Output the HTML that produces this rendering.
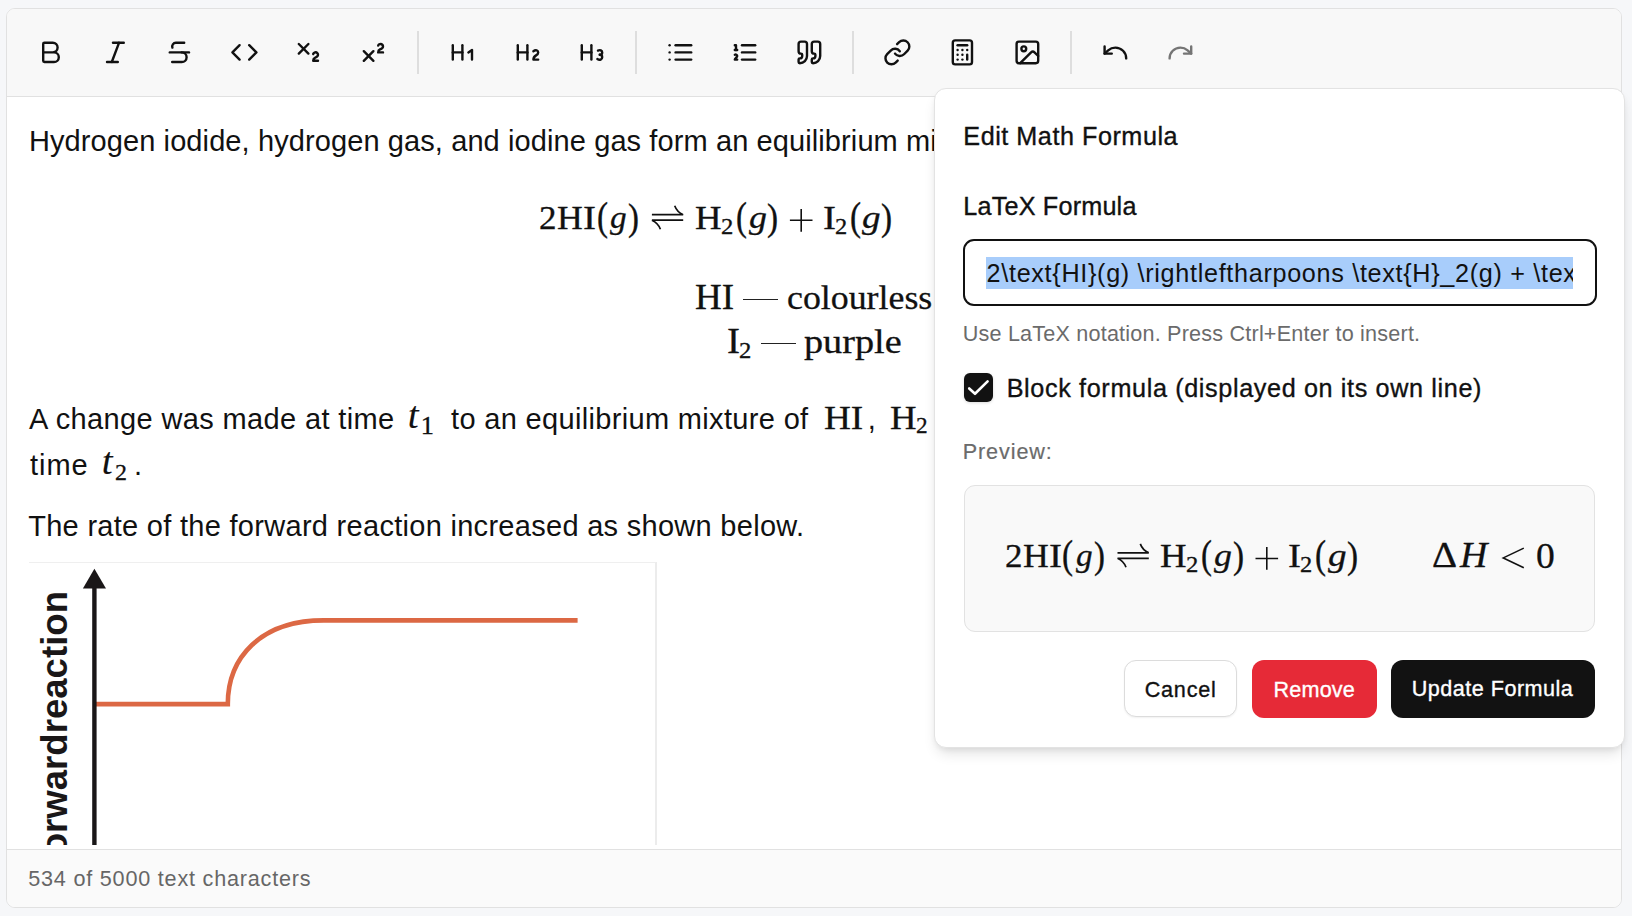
<!DOCTYPE html>
<html>
<head>
<meta charset="utf-8">
<style>
html,body{margin:0;padding:0}
body{width:1632px;height:916px;background:#f6f7f9;position:relative;overflow:hidden;font-family:"Liberation Sans",sans-serif;color:#111}
.abs{position:absolute}
.editor{position:absolute;left:6px;top:8px;width:1616px;height:900px;box-sizing:border-box;border:1px solid #e1e1e1;border-radius:9px;background:#fff;overflow:hidden}
.toolbar{position:absolute;left:0;top:0;width:1614px;height:87px;background:#f8f8f8;border-bottom:1px solid #e1e1e1}
.footer{position:absolute;left:0;top:840px;width:1614px;height:58px;background:#fafafa;border-top:1px solid #e1e1e1}
.ic{position:absolute;top:38px;width:28.8px;height:28.8px;fill:none;stroke:#111;stroke-width:2;stroke-linecap:round;stroke-linejoin:round}
.sep{position:absolute;top:31px;width:2px;height:43px;background:#dedede}
.t{position:absolute;white-space:pre;line-height:1}
.popup{position:absolute;left:934px;top:88px;width:691px;height:660px;box-sizing:border-box;background:#fff;border:1px solid #e3e3e3;border-radius:12px;box-shadow:0 8px 14px -3px rgba(0,0,0,.12),0 3px 6px -2px rgba(0,0,0,.08)}
.btn{position:absolute;box-sizing:border-box;border-radius:12px}
</style>
</head>
<body>
<div class="editor">
  <div class="toolbar"></div>
  <div class="footer"></div>
</div>
<!-- toolbar icons (page coords) -->
<svg class="ic" style="left:36px" viewBox="0 0 24 24"><path d="M6 12h9a4 4 0 0 1 0 8H7a1 1 0 0 1-1-1V5a1 1 0 0 1 1-1h7a4 4 0 0 1 0 8"/></svg>
<svg class="ic" style="left:100.6px" viewBox="0 0 24 24"><line x1="19" x2="10" y1="4" y2="4"/><line x1="14" x2="5" y1="20" y2="20"/><line x1="15" x2="9" y1="4" y2="20"/></svg>
<svg class="ic" style="left:165.2px" viewBox="0 0 24 24"><path d="M16 4H9a3 3 0 0 0-2.83 4"/><path d="M14 12a4 4 0 0 1 0 8H6"/><line x1="4" x2="20" y1="12" y2="12"/></svg>
<svg class="ic" style="left:229.8px" viewBox="0 0 24 24"><polyline points="16 18 22 12 16 6"/><polyline points="8 6 2 12 8 18"/></svg>
<svg class="ic" style="left:294.4px" viewBox="0 0 24 24"><path d="m4 5 8 8"/><path d="m12 5-8 8"/><path d="M20 19h-4c0-1.5.44-2 1.5-2.5S20 15.33 20 14c0-.47-.17-.93-.48-1.29a2.110 2.110 0 0 0-2.620-.440c-.42.24-.74.62-.9 1.07"/></svg>
<svg class="ic" style="left:359px" viewBox="0 0 24 24"><path d="m4 19 8-8"/><path d="m12 19-8-8"/><path d="M20 12h-4c0-1.5.442-2 1.5-2.5S20 8.334 20 7.002c0-.472-.17-.93-.484-1.290a2.105 2.105 0 0 0-2.617-.436c-.42.239-.738.614-.899 1.060"/></svg>
<div class="sep" style="left:417px"></div>
<svg class="ic" style="left:448px" viewBox="0 0 24 24"><path d="M4 12h8"/><path d="M4 18V6"/><path d="M12 18V6"/><path d="m17 12 3-2v8"/></svg>
<svg class="ic" style="left:512.6px" viewBox="0 0 24 24"><path d="M4 12h8"/><path d="M4 18V6"/><path d="M12 18V6"/><path d="M21 18h-4c0-4 4-3 4-6 0-1.5-2-2.5-4-1"/></svg>
<svg class="ic" style="left:577.2px" viewBox="0 0 24 24"><path d="M4 12h8"/><path d="M4 18V6"/><path d="M12 18V6"/><path d="M17.5 10.5c1.7-1 3.5 0 3.5 1.5a2 2 0 0 1-2 2"/><path d="M17 17.5c2 1.5 4 .3 4-1.5a2 2 0 0 0-2-2"/></svg>
<div class="sep" style="left:635px"></div>
<svg class="ic" style="left:666px" viewBox="0 0 24 24"><line x1="8" x2="21" y1="6" y2="6"/><line x1="8" x2="21" y1="12" y2="12"/><line x1="8" x2="21" y1="18" y2="18"/><line x1="3" x2="3.01" y1="6" y2="6"/><line x1="3" x2="3.01" y1="12" y2="12"/><line x1="3" x2="3.01" y1="18" y2="18"/></svg>
<svg class="ic" style="left:730.4px" viewBox="0 0 24 24"><line x1="10" x2="21" y1="6" y2="6"/><line x1="10" x2="21" y1="12" y2="12"/><line x1="10" x2="21" y1="18" y2="18"/><path d="M4 6h1v4"/><path d="M4 10h2"/><path d="M6 18H4c0-1 2-2 2-3s-1-1.5-2-1"/></svg>
<svg class="ic" style="left:795px" viewBox="0 0 24 24"><path d="M16 3a2 2 0 0 0-2 2v6a2 2 0 0 0 2 2 1 1 0 0 1 1 1v1a2 2 0 0 1-2 2 1 1 0 0 0-1 1v2a1 1 0 0 0 1 1 6 6 0 0 0 6-6V5a2 2 0 0 0-2-2z"/><path d="M5 3a2 2 0 0 0-2 2v6a2 2 0 0 0 2 2 1 1 0 0 1 1 1v1a2 2 0 0 1-2 2 1 1 0 0 0-1 1v2a1 1 0 0 0 1 1 6 6 0 0 0 6-6V5a2 2 0 0 0-2-2z"/></svg>
<div class="sep" style="left:852px"></div>
<svg class="ic" style="left:883px" viewBox="0 0 24 24"><path d="M10 13a5 5 0 0 0 7.54.54l3-3a5 5 0 0 0-7.07-7.07l-1.72 1.71"/><path d="M14 11a5 5 0 0 0-7.54-.54l-3 3a5 5 0 0 0 7.07 7.07l1.71-1.71"/></svg>
<svg class="ic" style="left:948.2px" viewBox="0 0 24 24"><rect width="16" height="20" x="4" y="2" rx="2"/><line x1="8" x2="16" y1="6" y2="6"/><line x1="16" x2="16" y1="14" y2="18"/><path d="M16 10h.01"/><path d="M12 10h.01"/><path d="M8 10h.01"/><path d="M12 14h.01"/><path d="M8 14h.01"/><path d="M12 18h.01"/><path d="M8 18h.01"/></svg>
<svg class="ic" style="left:1013px" viewBox="0 0 24 24"><rect width="18" height="18" x="3" y="3" rx="2" ry="2"/><circle cx="9" cy="9" r="2"/><path d="m21 15-3.086-3.086a2 2 0 0 0-2.828 0L6 21"/></svg>
<div class="sep" style="left:1070px"></div>
<svg class="ic" style="left:1101px" viewBox="0 0 24 24"><path d="M3 7v6h6"/><path d="M21 17a9 9 0 0 0-9-9 9 9 0 0 0-6 2.3L3 13"/></svg>
<svg class="ic" style="left:1166px;stroke:#757575" viewBox="0 0 24 24"><path d="M21 7v6h-6"/><path d="M3 17a9 9 0 0 1 9-9 9 9 0 0 1 6 2.3l3 2.7"/></svg>



<div class='abs' style='left:29px;top:97px;width:640px;height:748px;overflow:hidden'>
 <div class='abs' style='left:0;top:465px;width:628px;height:400px;background:#fff;border-top:1px solid #efefef;border-right:2px solid #ececec;box-sizing:border-box'></div>
 <svg class='abs' style='left:-29px;top:-97px;overflow:visible' width='700' height='900'>
  <path d='M96 704.1H227.8C227.8 658.1 260 620.4 324 620.4H577.6' fill='none' stroke='#dc6844' stroke-width='4.6'/>
  <path d='M94.4 845V586' stroke='#1a1718' stroke-width='4.4'/>
  <path d='M94.4 568.7L106 588.5H82.9Z' fill='#1a1718'/>
  <text transform='translate(66.8 591) rotate(-90)' text-anchor='end' font-family='Liberation Sans' font-weight='700' font-size='36.6' fill='#1a1718'>Rate of forwardreaction</text>
 </svg>
</div>

<div class='t' style='left:28.90px;top:126.80px;font-family:"Liberation Sans";font-style:normal;font-weight:400;font-size:29px;color:#111;letter-spacing:0.100px;'>Hydrogen iodide, hydrogen gas, and iodine gas form an equilibrium</div>
<div class='t' style='left:905.90px;top:126.80px;font-family:"Liberation Sans";font-style:normal;font-weight:400;font-size:29px;color:#111;letter-spacing:0.3px;'>mixture.</div>
<div class='t' style='left:29.10px;top:404.70px;font-family:"Liberation Sans";font-style:normal;font-weight:400;font-size:29px;color:#111;letter-spacing:0.371px;'>A change was made at time</div>
<div class='t' style='left:451.00px;top:404.70px;font-family:"Liberation Sans";font-style:normal;font-weight:400;font-size:29px;color:#111;letter-spacing:0.333px;'>to an equilibrium mixture of</div>
<div class='t' style='left:867.80px;top:404.70px;font-family:"Liberation Sans";font-style:normal;font-weight:400;font-size:29px;color:#111;'>,</div>
<div class='t' style='left:30.10px;top:450.70px;font-family:"Liberation Sans";font-style:normal;font-weight:400;font-size:29px;color:#111;letter-spacing:0.933px;'>time</div>
<div class='t' style='left:134.00px;top:450.70px;font-family:"Liberation Sans";font-style:normal;font-weight:400;font-size:29px;color:#111;'>.</div>
<div class='t' style='left:28.20px;top:511.70px;font-family:"Liberation Sans";font-style:normal;font-weight:400;font-size:29px;color:#111;letter-spacing:0.291px;'>The rate of the forward reaction increased as shown below.</div>
<div class='t' style='left:539.00px;top:201.30px;font-family:"Liberation Serif";font-style:normal;font-weight:400;font-size:34.8px;color:#111;transform:scale(1.0071,0.9875);transform-origin:2px 4px;-webkit-text-stroke:0.3px #111;'>2</div>
<div class='t' style='left:556.90px;top:201.30px;font-family:"Liberation Serif";font-style:normal;font-weight:400;font-size:34.8px;color:#111;transform:scale(1.0261,0.9875);transform-origin:1px 4px;-webkit-text-stroke:0.3px #111;'>H</div>
<div class='t' style='left:583.11px;top:201.30px;font-family:"Liberation Serif";font-style:normal;font-weight:400;font-size:34.8px;color:#111;transform:scale(1.1200,0.9875);transform-origin:1px 4px;-webkit-text-stroke:0.3px #111;'>I</div>
<div class='t' style='left:596.60px;top:198.90px;font-family:"Liberation Serif";font-style:normal;font-weight:400;font-size:34.8px;color:#111;transform:scale(0.9556,1.1258);transform-origin:2px 4px;-webkit-text-stroke:0.3px #111;'>(</div>
<div class='t' style='left:610.30px;top:202.30px;font-family:"Liberation Serif";font-style:italic;font-weight:400;font-size:34.8px;color:#111;transform:scale(0.9563,0.9080);transform-origin:0px 11px;-webkit-text-stroke:0.3px #111;'>g</div>
<div class='t' style='left:628.30px;top:199.90px;font-family:"Liberation Serif";font-style:normal;font-weight:400;font-size:34.8px;color:#111;transform:scale(0.9444,1.0906);transform-origin:1px 3px;-webkit-text-stroke:0.3px #111;'>)</div>
<div class='t' style='left:694.70px;top:201.30px;font-family:"Liberation Serif";font-style:normal;font-weight:400;font-size:34.8px;color:#111;transform:scale(1.0565,0.9875);transform-origin:1px 4px;-webkit-text-stroke:0.3px #111;'>H</div>
<div class='t' style='left:720.80px;top:214.80px;font-family:"Liberation Serif";font-style:normal;font-weight:400;font-size:23.5px;color:#111;transform:scale(1.0500,0.9800);transform-origin:1px 4px;-webkit-text-stroke:0.3px #111;'>2</div>
<div class='t' style='left:735.80px;top:198.90px;font-family:"Liberation Serif";font-style:normal;font-weight:400;font-size:34.8px;color:#111;transform:scale(0.9444,1.1258);transform-origin:2px 4px;-webkit-text-stroke:0.3px #111;'>(</div>
<div class='t' style='left:748.80px;top:202.30px;font-family:"Liberation Serif";font-style:italic;font-weight:400;font-size:34.8px;color:#111;transform:scale(1.0312,0.9080);transform-origin:0px 11px;-webkit-text-stroke:0.3px #111;'>g</div>
<div class='t' style='left:767.40px;top:199.90px;font-family:"Liberation Serif";font-style:normal;font-weight:400;font-size:34.8px;color:#111;transform:scale(0.9556,1.0906);transform-origin:1px 3px;-webkit-text-stroke:0.3px #111;'>)</div>
<div class='t' style='left:822.71px;top:201.30px;font-family:"Liberation Serif";font-style:normal;font-weight:400;font-size:34.8px;color:#111;transform:scale(1.1200,0.9875);transform-origin:1px 4px;-webkit-text-stroke:0.3px #111;'>I</div>
<div class='t' style='left:834.80px;top:214.80px;font-family:"Liberation Serif";font-style:normal;font-weight:400;font-size:23.5px;color:#111;transform:scale(1.0400,0.9800);transform-origin:1px 4px;-webkit-text-stroke:0.3px #111;'>2</div>
<div class='t' style='left:849.70px;top:198.90px;font-family:"Liberation Serif";font-style:normal;font-weight:400;font-size:34.8px;color:#111;transform:scale(0.9556,1.1258);transform-origin:2px 4px;-webkit-text-stroke:0.3px #111;'>(</div>
<div class='t' style='left:862.20px;top:202.30px;font-family:"Liberation Serif";font-style:italic;font-weight:400;font-size:34.8px;color:#111;transform:scale(1.0687,0.9080);transform-origin:0px 11px;-webkit-text-stroke:0.3px #111;'>g</div>
<div class='t' style='left:881.40px;top:199.90px;font-family:"Liberation Serif";font-style:normal;font-weight:400;font-size:34.8px;color:#111;transform:scale(0.9556,1.0906);transform-origin:1px 3px;-webkit-text-stroke:0.3px #111;'>)</div>
<div class='t' style='left:695.40px;top:280.80px;font-family:"Liberation Serif";font-style:normal;font-weight:400;font-size:34.8px;color:#111;transform:scale(1.0657,1.0042);transform-origin:1px 4px;-webkit-text-stroke:0.3px #111;'>HI</div>
<div class='t' style='left:786.70px;top:282.10px;font-family:"Liberation Serif";font-style:normal;font-weight:400;font-size:34.8px;color:#111;transform:scale(1.0302,0.9520);transform-origin:1px 3px;-webkit-text-stroke:0.3px #111;'>colourless</div>
<div class='t' style='left:726.56px;top:325.00px;font-family:"Liberation Serif";font-style:normal;font-weight:400;font-size:34.8px;color:#111;transform:scale(1.1200,1.0042);transform-origin:1px 4px;-webkit-text-stroke:0.3px #111;'>I</div>
<div class='t' style='left:738.60px;top:339.00px;font-family:"Liberation Serif";font-style:normal;font-weight:400;font-size:23.5px;color:#111;transform:scale(1.0500,1.0000);transform-origin:1px 4px;-webkit-text-stroke:0.3px #111;'>2</div>
<div class='t' style='left:803.90px;top:325.90px;font-family:"Liberation Serif";font-style:normal;font-weight:400;font-size:34.8px;color:#111;transform:scale(1.1000,0.9424);transform-origin:1px 3px;-webkit-text-stroke:0.3px #111;'>purple</div>
<div class='t' style='left:408.32px;top:399.40px;font-family:"Liberation Serif";font-style:italic;font-weight:400;font-size:34.8px;color:#111;transform:scale(1.1200,1.0650);transform-origin:2px 8px;-webkit-text-stroke:0.1px #111;'>t</div>
<div class='t' style='left:420.82px;top:414.30px;font-family:"Liberation Serif";font-style:normal;font-weight:400;font-size:23.5px;color:#111;transform:scale(1.1200,1.0400);transform-origin:2px 4px;-webkit-text-stroke:0.3px #111;'>1</div>
<div class='t' style='left:823.50px;top:401.50px;font-family:"Liberation Serif";font-style:normal;font-weight:400;font-size:34.8px;color:#111;transform:scale(1.0714,0.9625);transform-origin:1px 4px;-webkit-text-stroke:0.3px #111;'>HI</div>
<div class='t' style='left:889.60px;top:401.50px;font-family:"Liberation Serif";font-style:normal;font-weight:400;font-size:34.8px;color:#111;transform:scale(1.0565,0.9625);transform-origin:1px 4px;-webkit-text-stroke:0.3px #111;'>H</div>
<div class='t' style='left:916.10px;top:414.20px;font-family:"Liberation Serif";font-style:normal;font-weight:400;font-size:23.5px;color:#111;transform:scale(0.9900,1.0267);transform-origin:1px 4px;-webkit-text-stroke:0.3px #111;'>2</div>
<div class='t' style='left:102.07px;top:445.30px;font-family:"Liberation Serif";font-style:italic;font-weight:400;font-size:34.8px;color:#111;transform:scale(1.1200,1.0700);transform-origin:2px 8px;-webkit-text-stroke:0.1px #111;'>t</div>
<div class='t' style='left:115.10px;top:460.90px;font-family:"Liberation Serif";font-style:normal;font-weight:400;font-size:23.5px;color:#111;transform:scale(1.0200,1.0000);transform-origin:1px 4px;-webkit-text-stroke:0.3px #111;'>2</div>
<div class='t' style='left:28.20px;top:867.70px;font-family:"Liberation Sans";font-style:normal;font-weight:400;font-size:21.6px;color:#666;letter-spacing:0.796px;'>534 of 5000 text characters</div>
<div class='abs' style='left:743px;top:299px;width:34.9px;height:1.3px;background:#222'></div><div class='abs' style='left:761.2px;top:343.2px;width:34.7px;height:1.3px;background:#222'></div>
<div class="popup"></div>
<div class="abs" style="left:963px;top:239px;width:634px;height:67px;box-sizing:border-box;border:2px solid #111;border-radius:11px;background:#fff"></div>
<div class='abs' style='left:986px;top:250px;width:587px;height:46px;overflow:hidden'><div class='abs' style='left:0;top:7px;width:587px;height:31.7px;background:#a8cdfb'></div><div class='t' style='left:0.60px;top:10.80px;font-family:"Liberation Sans";font-size:25.2px;color:#111;letter-spacing:0.685px'>2\text{HI}(g) \rightleftharpoons \text{H}_2(g) + \text{I}_2(g) \qquad \Delta H &lt; 0</div></div>
<div class="abs" style="left:964.2px;top:372.9px;width:28.9px;height:28.9px;border-radius:6px;background:#121212;box-shadow:0 1px 3px rgba(0,0,0,.15)"></div>
<svg class="abs" style="left:0;top:0;overflow:visible" width="1" height="1"><path d="M969.2 388.5L975 393.8L987.6 381.4" fill="none" stroke="#fff" stroke-width="2.6" stroke-linecap="round" stroke-linejoin="round"/></svg>
<div class="abs" style="left:964px;top:485px;width:631px;height:147px;box-sizing:border-box;border:1px solid #e2e2e2;border-radius:11px;background:#f9f9f9"></div>
<div class="btn" style="left:1123.7px;top:660.3px;width:113.7px;height:57px;background:#fff;border:1px solid #dcdcdc;box-shadow:0 1px 2px rgba(0,0,0,.06)"></div>
<div class="btn" style="left:1252px;top:660px;width:124.7px;height:57.8px;background:#e62a37"></div>
<div class="btn" style="left:1391.1px;top:660px;width:203.5px;height:57.6px;background:#121212"></div>
<div class='t' style='left:963.30px;top:124.10px;font-family:"Liberation Sans";font-style:normal;font-weight:400;font-size:25.2px;color:#111;letter-spacing:0.531px;-webkit-text-stroke:0.35px currentColor;'>Edit Math Formula</div>
<div class='t' style='left:963.30px;top:194.00px;font-family:"Liberation Sans";font-style:normal;font-weight:400;font-size:25.2px;color:#111;letter-spacing:0.192px;-webkit-text-stroke:0.35px currentColor;'>LaTeX Formula</div>
<div class='t' style='left:962.70px;top:322.60px;font-family:"Liberation Sans";font-style:normal;font-weight:400;font-size:21.6px;color:#6b6b6b;letter-spacing:0.198px;'>Use LaTeX notation. Press Ctrl+Enter to insert.</div>
<div class='t' style='left:1006.70px;top:375.80px;font-family:"Liberation Sans";font-style:normal;font-weight:400;font-size:25.2px;color:#111;letter-spacing:0.635px;-webkit-text-stroke:0.35px currentColor;'>Block formula (displayed on its own line)</div>
<div class='t' style='left:962.70px;top:440.80px;font-family:"Liberation Sans";font-style:normal;font-weight:400;font-size:21.6px;color:#6b6b6b;letter-spacing:0.900px;-webkit-text-stroke:0.2px currentColor;'>Preview:</div>
<div class='t' style='left:1144.70px;top:678.50px;font-family:"Liberation Sans";font-style:normal;font-weight:400;font-size:21.6px;color:#111;letter-spacing:0.780px;-webkit-text-stroke:0.35px currentColor;'>Cancel</div>
<div class='t' style='left:1273.50px;top:678.50px;font-family:"Liberation Sans";font-style:normal;font-weight:400;font-size:21.6px;color:#fff;letter-spacing:0.180px;-webkit-text-stroke:0.35px currentColor;'>Remove</div>
<div class='t' style='left:1411.70px;top:678.40px;font-family:"Liberation Sans";font-style:normal;font-weight:400;font-size:21.6px;color:#fff;letter-spacing:0.485px;-webkit-text-stroke:0.35px currentColor;'>Update Formula</div>
<div class='t' style='left:1004.60px;top:539.40px;font-family:"Liberation Serif";font-style:normal;font-weight:400;font-size:34.8px;color:#111;transform:scale(1.0071,0.9875);transform-origin:2px 4px;-webkit-text-stroke:0.3px #111;'>2</div>
<div class='t' style='left:1022.50px;top:539.40px;font-family:"Liberation Serif";font-style:normal;font-weight:400;font-size:34.8px;color:#111;transform:scale(1.0261,0.9875);transform-origin:1px 4px;-webkit-text-stroke:0.3px #111;'>H</div>
<div class='t' style='left:1048.71px;top:539.40px;font-family:"Liberation Serif";font-style:normal;font-weight:400;font-size:34.8px;color:#111;transform:scale(1.1200,0.9875);transform-origin:1px 4px;-webkit-text-stroke:0.3px #111;'>I</div>
<div class='t' style='left:1062.20px;top:537.00px;font-family:"Liberation Serif";font-style:normal;font-weight:400;font-size:34.8px;color:#111;transform:scale(0.9556,1.1258);transform-origin:2px 4px;-webkit-text-stroke:0.3px #111;'>(</div>
<div class='t' style='left:1075.90px;top:540.40px;font-family:"Liberation Serif";font-style:italic;font-weight:400;font-size:34.8px;color:#111;transform:scale(0.9562,0.9080);transform-origin:0px 11px;-webkit-text-stroke:0.3px #111;'>g</div>
<div class='t' style='left:1093.90px;top:538.00px;font-family:"Liberation Serif";font-style:normal;font-weight:400;font-size:34.8px;color:#111;transform:scale(0.9444,1.0906);transform-origin:1px 3px;-webkit-text-stroke:0.3px #111;'>)</div>
<div class='t' style='left:1160.30px;top:539.40px;font-family:"Liberation Serif";font-style:normal;font-weight:400;font-size:34.8px;color:#111;transform:scale(1.0565,0.9875);transform-origin:1px 4px;-webkit-text-stroke:0.3px #111;'>H</div>
<div class='t' style='left:1186.40px;top:552.90px;font-family:"Liberation Serif";font-style:normal;font-weight:400;font-size:23.5px;color:#111;transform:scale(1.0500,0.9800);transform-origin:1px 4px;-webkit-text-stroke:0.3px #111;'>2</div>
<div class='t' style='left:1201.40px;top:537.00px;font-family:"Liberation Serif";font-style:normal;font-weight:400;font-size:34.8px;color:#111;transform:scale(0.9444,1.1258);transform-origin:2px 4px;-webkit-text-stroke:0.3px #111;'>(</div>
<div class='t' style='left:1214.40px;top:540.40px;font-family:"Liberation Serif";font-style:italic;font-weight:400;font-size:34.8px;color:#111;transform:scale(1.0312,0.9080);transform-origin:0px 11px;-webkit-text-stroke:0.3px #111;'>g</div>
<div class='t' style='left:1233.00px;top:538.00px;font-family:"Liberation Serif";font-style:normal;font-weight:400;font-size:34.8px;color:#111;transform:scale(0.9556,1.0906);transform-origin:1px 3px;-webkit-text-stroke:0.3px #111;'>)</div>
<div class='t' style='left:1288.31px;top:539.40px;font-family:"Liberation Serif";font-style:normal;font-weight:400;font-size:34.8px;color:#111;transform:scale(1.1200,0.9875);transform-origin:1px 4px;-webkit-text-stroke:0.3px #111;'>I</div>
<div class='t' style='left:1300.40px;top:552.90px;font-family:"Liberation Serif";font-style:normal;font-weight:400;font-size:23.5px;color:#111;transform:scale(1.0400,0.9800);transform-origin:1px 4px;-webkit-text-stroke:0.3px #111;'>2</div>
<div class='t' style='left:1315.30px;top:537.00px;font-family:"Liberation Serif";font-style:normal;font-weight:400;font-size:34.8px;color:#111;transform:scale(0.9556,1.1258);transform-origin:2px 4px;-webkit-text-stroke:0.3px #111;'>(</div>
<div class='t' style='left:1327.80px;top:540.40px;font-family:"Liberation Serif";font-style:italic;font-weight:400;font-size:34.8px;color:#111;transform:scale(1.0688,0.9080);transform-origin:0px 11px;-webkit-text-stroke:0.3px #111;'>g</div>
<div class='t' style='left:1347.00px;top:538.00px;font-family:"Liberation Serif";font-style:normal;font-weight:400;font-size:34.8px;color:#111;transform:scale(0.9556,1.0906);transform-origin:1px 3px;-webkit-text-stroke:0.3px #111;'>)</div>
<div class='t' style='left:1431.50px;top:538.00px;font-family:"Liberation Serif";font-style:normal;font-weight:400;font-size:34.8px;color:#111;transform:scale(1.1200,1.0458);transform-origin:1px 4px;-webkit-text-stroke:0.3px #111;'>Δ</div>
<div class='t' style='left:1459.90px;top:538.80px;font-family:"Liberation Serif";font-style:italic;font-weight:400;font-size:34.8px;color:#111;transform:scale(1.0889,1.0125);transform-origin:0px 4px;-webkit-text-stroke:0.3px #111;'>H</div>
<div class='t' style='left:1536.00px;top:539.50px;font-family:"Liberation Serif";font-style:normal;font-weight:400;font-size:34.8px;color:#111;transform:scale(1.0800,1.0125);transform-origin:1px 4px;-webkit-text-stroke:0.3px #111;'>0</div>
<svg class='abs' style='left:0;top:0;overflow:visible' width='1' height='1'><g fill='none' stroke='#111' stroke-width='1.7' stroke-linecap='butt'><path d='M651.9 214.7H683.2M683.2 214.7C679.2 213.0 676.2 210.0 674.7 205.8'/><path d='M683.2 220.2H651.9M651.9 220.2C655.9 222.0 658.9 225.0 660.4 229.2'/></g><g stroke='#111' stroke-width='1.6'><path d='M789.9 220.3H812.5M801.2 209.0V231.7'/></g></svg><svg class='abs' style='left:0;top:0;overflow:visible' width='1' height='1'><g fill='none' stroke='#111' stroke-width='1.7' stroke-linecap='butt'><path d='M1117.5 552.8H1148.8M1148.8 552.8C1144.8 551.1 1141.8 548.1 1140.3 543.9'/><path d='M1148.8 558.3H1117.5M1117.5 558.3C1121.5 560.1 1124.5 563.1 1126.0 567.3'/></g><g stroke='#111' stroke-width='1.6'><path d='M1255.5 558.5H1278.1M1266.8 547.1V569.8'/></g><g fill='none' stroke='#111' stroke-width='1.6'><path d='M1523.8 548.1L1503.3 557.9L1523.8 567.7'/></g></svg>
</body>
</html>
